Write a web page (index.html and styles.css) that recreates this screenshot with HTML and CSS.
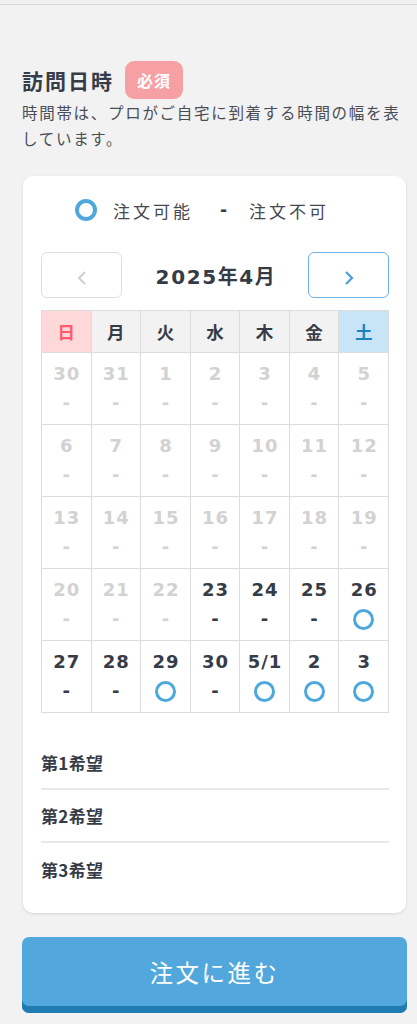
FILE: index.html
```html
<!DOCTYPE html>
<html lang="ja">
<head>
<meta charset="utf-8">
<title>訪問日時</title>
<link rel="stylesheet" href="styles.css">
</head>
<body>
<div class="topbar"></div>
<main class="page">
  <div class="heading">
    <h2 class="title">訪問日時</h2>
    <span class="badge">必須</span>
  </div>
  <p class="desc">時間帯は、プロがご自宅に到着する時間の幅を表しています。</p>

  <section class="card">
    <div class="legend">
      <span class="ring ring-legend"></span>
      <span class="legend-text">注文可能</span>
      <span class="legend-dash">-</span>
      <span class="legend-text">注文不可</span>
    </div>

    <div class="nav">
      <button class="navbtn navbtn-prev" aria-label="前月">
        <svg width="10" height="16" viewBox="0 0 10 16"><polyline points="8,2 2,8 8,14" fill="none" stroke="#cfcfcf" stroke-width="2"/></svg>
      </button>
      <div class="month">2025年4月</div>
      <button class="navbtn navbtn-next" aria-label="翌月">
        <svg width="10" height="16" viewBox="0 0 10 16"><polyline points="2,2 8,8 2,14" fill="none" stroke="#4a9fd8" stroke-width="2.2"/></svg>
      </button>
    </div>

    <table class="cal">
      <thead>
        <tr>
          <th class="sun">日</th><th>月</th><th>火</th><th>水</th><th>木</th><th>金</th><th class="sat">土</th>
        </tr>
      </thead>
      <tbody>
        <tr>
          <td class="off"><div class="num">30</div><div class="mark">-</div></td>
          <td class="off"><div class="num">31</div><div class="mark">-</div></td>
          <td class="off"><div class="num">1</div><div class="mark">-</div></td>
          <td class="off"><div class="num">2</div><div class="mark">-</div></td>
          <td class="off"><div class="num">3</div><div class="mark">-</div></td>
          <td class="off"><div class="num">4</div><div class="mark">-</div></td>
          <td class="off"><div class="num">5</div><div class="mark">-</div></td>
        </tr>
        <tr>
          <td class="off"><div class="num">6</div><div class="mark">-</div></td>
          <td class="off"><div class="num">7</div><div class="mark">-</div></td>
          <td class="off"><div class="num">8</div><div class="mark">-</div></td>
          <td class="off"><div class="num">9</div><div class="mark">-</div></td>
          <td class="off"><div class="num">10</div><div class="mark">-</div></td>
          <td class="off"><div class="num">11</div><div class="mark">-</div></td>
          <td class="off"><div class="num">12</div><div class="mark">-</div></td>
        </tr>
        <tr>
          <td class="off"><div class="num">13</div><div class="mark">-</div></td>
          <td class="off"><div class="num">14</div><div class="mark">-</div></td>
          <td class="off"><div class="num">15</div><div class="mark">-</div></td>
          <td class="off"><div class="num">16</div><div class="mark">-</div></td>
          <td class="off"><div class="num">17</div><div class="mark">-</div></td>
          <td class="off"><div class="num">18</div><div class="mark">-</div></td>
          <td class="off"><div class="num">19</div><div class="mark">-</div></td>
        </tr>
        <tr>
          <td class="off"><div class="num">20</div><div class="mark">-</div></td>
          <td class="off"><div class="num">21</div><div class="mark">-</div></td>
          <td class="off"><div class="num">22</div><div class="mark">-</div></td>
          <td><div class="num">23</div><div class="mark">-</div></td>
          <td><div class="num">24</div><div class="mark">-</div></td>
          <td><div class="num">25</div><div class="mark">-</div></td>
          <td><div class="num">26</div><div class="mark"><span class="ring"></span></div></td>
        </tr>
        <tr>
          <td><div class="num">27</div><div class="mark">-</div></td>
          <td><div class="num">28</div><div class="mark">-</div></td>
          <td><div class="num">29</div><div class="mark"><span class="ring"></span></div></td>
          <td><div class="num">30</div><div class="mark">-</div></td>
          <td><div class="num">5/1</div><div class="mark"><span class="ring"></span></div></td>
          <td><div class="num">2</div><div class="mark"><span class="ring"></span></div></td>
          <td><div class="num">3</div><div class="mark"><span class="ring"></span></div></td>
        </tr>
      </tbody>
    </table>

    <ul class="prefs">
      <li class="pref">第1希望</li>
      <li class="pref">第2希望</li>
      <li class="pref">第3希望</li>
    </ul>
  </section>

  <button class="submit">注文に進む</button>
</main>
</body>
</html>
```

FILE: styles.css
```css
* { box-sizing: border-box; }

html, body {
  margin: 0;
  padding: 0;
  background: #f2f2f2;
  color: #363c47;
  font-family: "DejaVu Sans", "Noto Sans CJK JP", sans-serif;
}

.topbar {
  height: 5px;
  background: #efefef;
  border-bottom: 1px solid #dadada;
}

.page {
  padding: 56px 10px 0 23px;
}

.heading {
  display: flex;
  align-items: center;
  gap: 13px;
  height: 38px;
  margin-left: -1px;
}

.title {
  margin: 0;
  font-size: 21px;
  font-weight: 700;
  letter-spacing: 2px;
  font-family: "Noto Sans CJK JP", sans-serif;
  color: #363c47;
}

.badge {
  display: inline-flex;
  align-items: center;
  justify-content: center;
  width: 58px;
  height: 38px;
  border-radius: 9px;
  background: #f6a0a4;
  color: #fff;
  font-family: "Noto Sans CJK JP", sans-serif;
  font-weight: 700;
  font-size: 16px;
  letter-spacing: 1px;
  margin-left: -2px;
}

.desc {
  margin: 0;
  font-family: "Noto Sans CJK JP", sans-serif;
  font-size: 15.5px;
  line-height: 26px;
  letter-spacing: 1.7px;
  color: #4a4d55;
  margin-left: -1px;
}

.card {
  margin-top: 25px;
  background: #fff;
  border-radius: 10px;
  box-shadow: 0 1px 3px rgba(0,0,0,0.12);
  padding: 20px 17px 17px 18px;
  width: 383px;
}

.legend {
  display: flex;
  align-items: center;
  height: 28px;
  padding-left: 34px;
  font-family: "Noto Sans CJK JP", sans-serif;
  font-size: 17px;
  letter-spacing: 3px;
  color: #45484f;
}

.ring {
  display: inline-block;
  width: 21px;
  height: 21px;
  border: 3.5px solid #4fa8dd;
  border-radius: 50%;
}

.ring-legend {
  width: 22px;
  height: 22px;
  border-width: 4px;
  margin-right: 16px;
}

.legend-dash {
  font-family: "DejaVu Sans", sans-serif;
  font-weight: 700;
  color: #363c47;
  margin: 0 19px 0 27px;
}

.nav {
  display: flex;
  align-items: center;
  justify-content: space-between;
  margin-top: 28px;
  height: 46px;
}

.navbtn {
  display: flex;
  align-items: center;
  justify-content: center;
  width: 81px;
  height: 46px;
  background: #fff;
  border-radius: 6px;
  padding: 6px 0 0;
  cursor: pointer;
}

.navbtn-prev { border: 1px solid #dedede; }
.navbtn-next { border: 1px solid #6cb3e2; }

.month {
  font-family: "DejaVu Sans", "Noto Sans CJK JP", sans-serif;
  font-weight: 700;
  font-size: 20px;
  letter-spacing: 1.6px;
  color: #363c47;
  margin-left: 2px;
}

.cal {
  margin-top: 12px;
  width: 348px;
  border-collapse: collapse;
  table-layout: fixed;
}

.cal th, .cal td {
  border: 1px solid #dcdcdc;
  text-align: center;
  padding: 0;
}

.cal th {
  height: 42px;
  background: #f2f2f2;
  font-family: "Noto Sans CJK JP", sans-serif;
  font-weight: 700;
  font-size: 17.5px;
  color: #363c47;
}

.cal th.sun { background: #ffd9da; color: #ff5b6b; }
.cal th.sat { background: #c7e5f6; color: #1f80c2; }

.cal td {
  height: 72px;
  vertical-align: top;
  padding-top: 7px;
}

.num {
  height: 28px;
  line-height: 28px;
  font-weight: 700;
  font-size: 18px;
  letter-spacing: 1px;
  text-indent: 1px;
  color: #363c47;
}

.mark {
  margin-top: 4px;
  height: 22px;
  line-height: 22px;
  font-weight: 700;
  font-size: 18px;
  color: #363c47;
  display: flex;
  align-items: center;
  justify-content: center;
}

.cal td.off .num,
.cal td.off .mark { color: #d2d2d2; }

.prefs {
  list-style: none;
  margin: 24px 0 0;
  padding: 0;
}

.pref {
  height: 53px;
  display: flex;
  align-items: center;
  font-family: "Noto Sans CJK JP", sans-serif;
  font-weight: 700;
  font-size: 17px;
  letter-spacing: 0.3px;
  color: #363c47;
  border-bottom: 2px solid #e8e8e8;
}

.pref:last-child { border-bottom: none; }

.submit {
  display: block;
  margin-top: 24px;
  width: 385px;
  height: 76px;
  margin-left: -1px;
  border: none;
  border-radius: 7px;
  background: #52a8dc;
  box-shadow: inset 0 -7px 0 #1f7bb1;
  color: #fff;
  font-family: "Noto Sans CJK JP", sans-serif;
  font-size: 23.5px;
  letter-spacing: 2.5px;
  padding: 0 0 6px;
  cursor: pointer;
}
```
